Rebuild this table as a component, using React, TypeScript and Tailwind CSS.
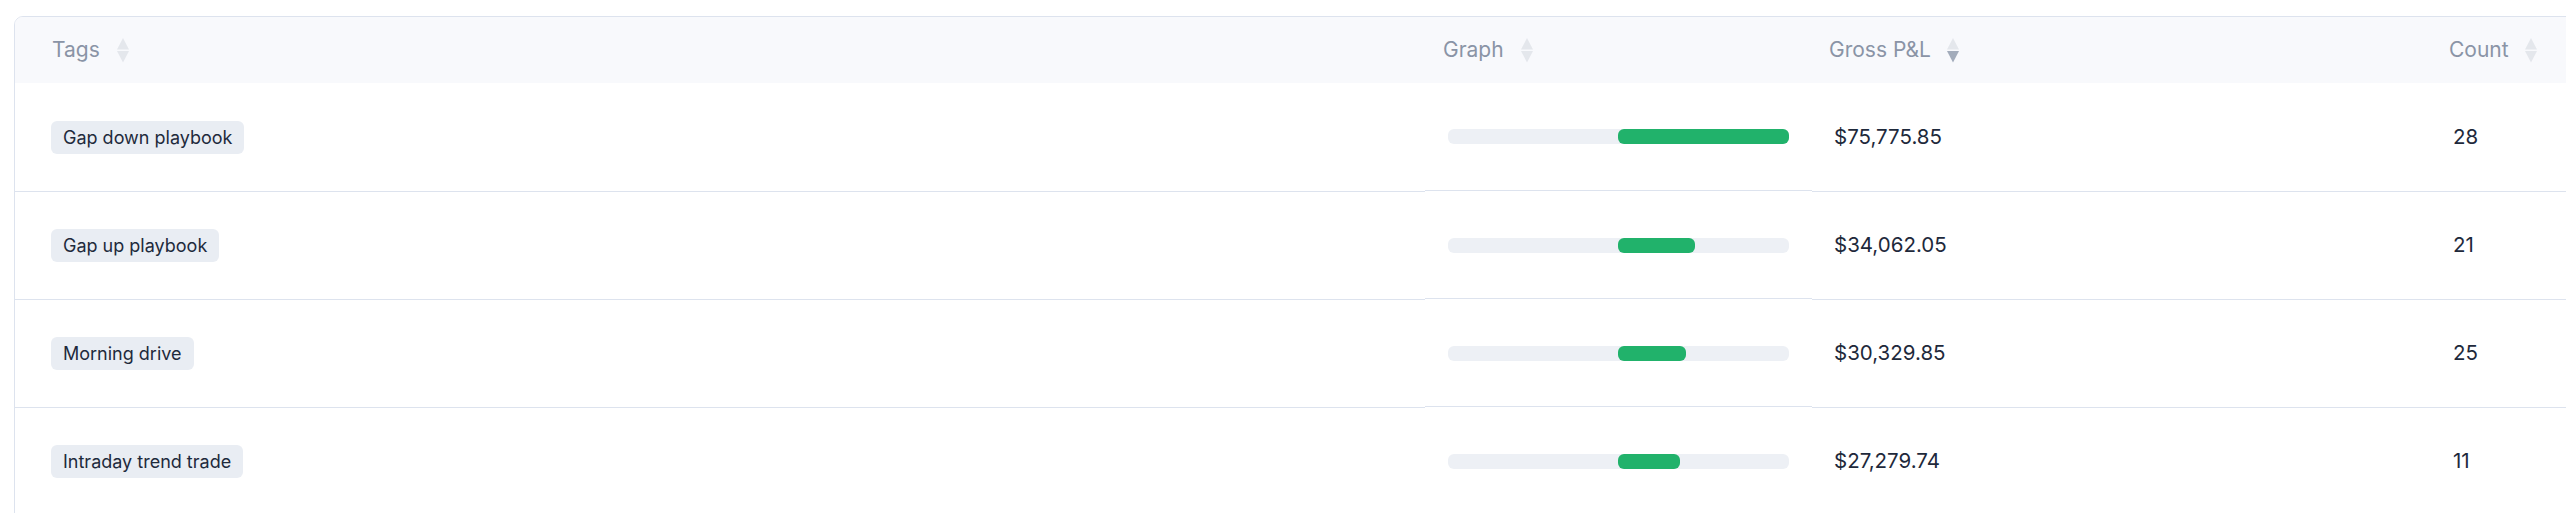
import React from "react";

type Row = { tag: string; pnl: number; count: number };

const rows: Row[] = [
  { tag: "Gap down playbook", pnl: 75775.85, count: 28 },
  { tag: "Gap up playbook", pnl: 34062.05, count: 21 },
  { tag: "Morning drive", pnl: 30329.85, count: 25 },
  { tag: "Intraday trend trade", pnl: 27279.74, count: 11 },
];

const MAX = 75775.85;

function SortIcon({ active }: { active?: "asc" | "desc" }) {
  return (
    <svg width="12" height="25" viewBox="0 0 12 25" className="shrink-0">
      <polygon points="6,0 12,11.5 0,11.5" fill={active === "asc" ? "#a3acbb" : "#e4e7ec"} />
      <polygon points="0,13 12,13 6,24.5" fill={active === "desc" ? "#a3acbb" : "#e4e7ec"} />
    </svg>
  );
}

function fmt(n: number) {
  return "$" + n.toLocaleString("en-US", { minimumFractionDigits: 2, maximumFractionDigits: 2 });
}

export default function App() {
  return (
    <div
      className="w-[2566px] h-[513px] overflow-hidden bg-white pt-[16px] pl-[14px]"
      style={{ fontFamily: "Inter, 'Noto Sans', sans-serif" }}
    >
      <div className="w-[2640px] border border-[#dde3ee] rounded-t-[9px] overflow-hidden">
        {/* header */}
        <div className="flex h-[66px] bg-[#f8f9fc] text-[21px] text-[#8a94a6]">
          <div className="w-[1410px] flex items-center gap-[17px] pl-[37px]">
            <span>Tags</span>
            <SortIcon />
          </div>
          <div className="w-[387px] flex items-center gap-[17px] pl-[18px]">
            <span>Graph</span>
            <SortIcon />
          </div>
          <div className="w-[618px] flex items-center gap-[16px] pl-[17px]">
            <span>Gross P&amp;L</span>
            <SortIcon active="desc" />
          </div>
          <div className="flex-1 flex items-center gap-[16px] pl-[19px]">
            <span>Count</span>
            <SortIcon />
          </div>
        </div>
        {/* rows */}
        {rows.map((r, i) => {
          const pct = r.pnl / MAX;
          return (
            <div key={r.tag} className={`flex ${i === 0 ? "h-[109px]" : "h-[108px]"}`}>
              <div className="w-[1410px] flex items-center pl-[36px] border-b border-[#dde3ee]">
                <span className="h-[33px] flex items-center px-[12px] rounded-[6px] bg-[#e9edf3] text-[18px] text-[#1e2a3c]">
                  {r.tag}
                </span>
              </div>
              <div className="w-[387px] flex items-center pl-[23px] mb-[1px] border-b border-[#dde3ee]">
                <div className="relative w-[341px] h-[15px] rounded-[6px] bg-[#edf0f5]">
                  <div
                    className="absolute top-0 h-[15px] rounded-[6px] bg-[#21b26b] left-[170px]"
                    style={{ width: `${Math.round(pct * 171)}px` }}
                  />
                </div>
              </div>
              <div className="w-[618px] flex items-center pl-[22px] border-b border-[#dde3ee] text-[20.5px] text-[#1e293b]">
                {fmt(r.pnl)}
              </div>
              <div className="flex-1 flex items-center pl-[23px] border-b border-[#dde3ee] text-[20.5px] text-[#1e293b]">
                {r.count}
              </div>
            </div>
          );
        })}
      </div>
    </div>
  );
}
